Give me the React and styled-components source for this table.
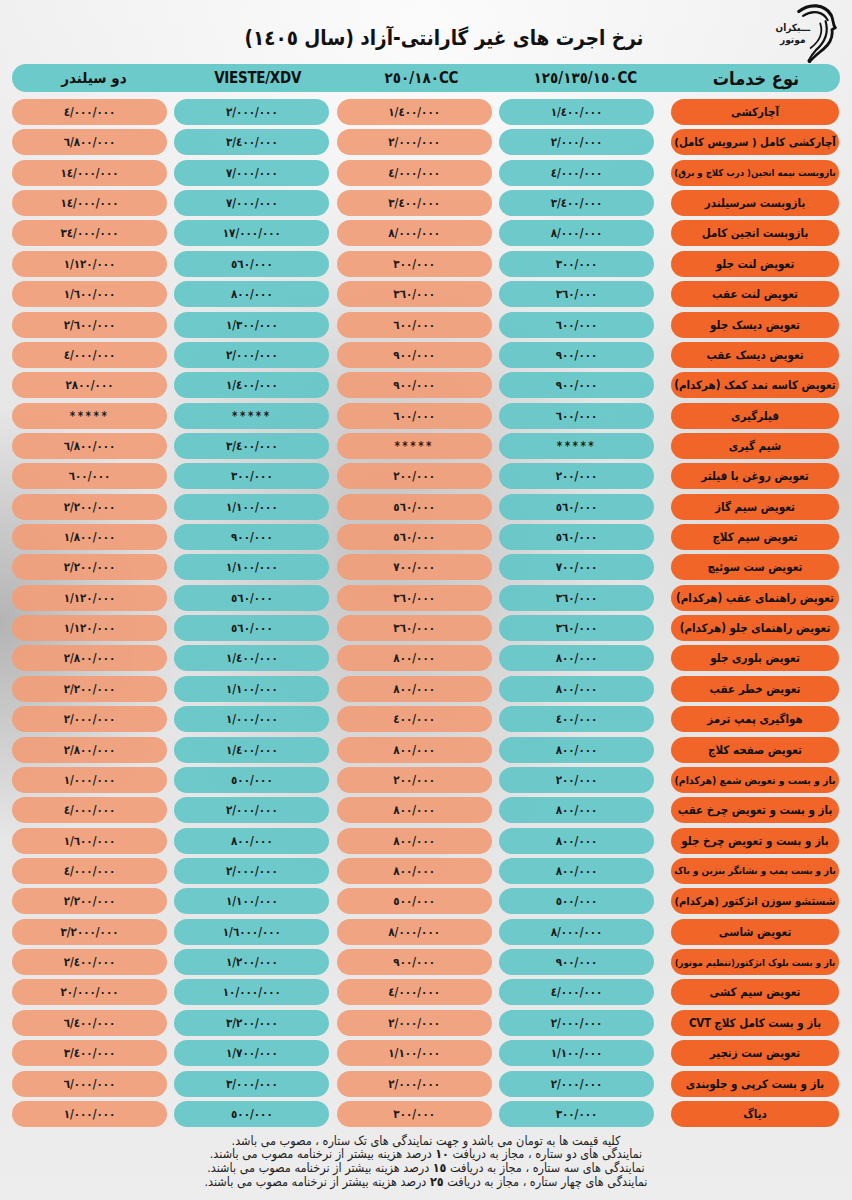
import React, { useLayoutEffect, useRef, useState } from "react";
import styled, { createGlobalStyle } from "styled-components";

const GlobalStyle = createGlobalStyle`
  html, body { margin: 0; padding: 0; }
  body {
    background:
      radial-gradient(ellipse 60% 30% at 50% 2%, rgba(252,252,252,0.95) 0%, rgba(252,252,252,0) 100%),
      radial-gradient(ellipse 22% 18% at 0% 52%, rgba(140,140,140,0.55) 0%, rgba(140,140,140,0) 100%),
      radial-gradient(ellipse 28% 30% at 45% 45%, rgba(120,120,120,0.3) 0%, rgba(120,120,120,0) 100%),
      radial-gradient(ellipse 30% 20% at 100% 40%, rgba(200,200,200,0.5) 0%, rgba(200,200,200,0) 100%),
      linear-gradient(180deg, #eeeeee 0%, #e4e4e4 45%, #e7e7e7 75%, #ededed 100%);
    font-family: "DejaVu Sans Condensed", "DejaVu Sans", sans-serif;
  }
`;

const FONT = `"DejaVu Sans Condensed", "DejaVu Sans", sans-serif`;

const Page = styled.div`
  width: 852px;
  min-height: 1200px;
  direction: rtl;
  font-family: ${FONT};
  color: #151515;
`;

const TopBar = styled.div`
  height: 64px;
  display: grid;
  grid-template-columns: 82px 1fr 118px;
  align-items: center;
`;

const LogoBox = styled.div`
  display: flex;
  align-items: center;
  justify-content: flex-start;
  height: 64px;
  padding-right: 14px;
`;

const LogoText = styled.div`
  display: flex;
  flex-direction: column;
  align-items: center;
  font-size: 10px;
  font-weight: 700;
  line-height: 12px;
  color: #1a1a1a;
  margin-top: 4px;
  margin-right: -14px;
`;

const LogoMark = styled.svg`
  width: 42px;
  height: 60px;
  margin-top: 2px;
  flex-shrink: 0;
`;

const Title = styled.h1`
  margin: 0;
  padding-top: 12px;
  text-align: center;
  font-size: 20.5px;
  font-weight: 700;
  color: #111;
  letter-spacing: -0.3px;
`;

const HeaderBar = styled.div`
  margin: 0 12px;
  height: 28px;
  border-radius: 14px;
  background: #6ccaca;
  display: grid;
  grid-template-columns: 168px 1fr;
  align-items: center;
`;

const HeaderCols = styled.div`
  display: grid;
  grid-template-columns: repeat(4, 1fr);
  align-items: center;
  padding-right: 5px;
`;

const HeaderCell = styled.div`
  text-align: center;
  font-size: ${(p) => (p.$main ? "18px" : "15px")};
  font-weight: 700;
  direction: ${(p) => (p.$ltr ? "ltr" : "rtl")};
  color: #111;
  letter-spacing: ${(p) => (p.$ltr ? "-0.3px" : "0")};
`;

const Table = styled.div`
  margin: 7px 13px 0 12px;
  display: flex;
  flex-direction: column;
  gap: 4.36px;
`;

const Row = styled.div`
  display: grid;
  grid-template-columns: 177.67px repeat(4, 155px);
  column-gap: 7.33px;
  height: 26px;
`;

const ServicePill = styled.div`
  width: 168px;
  height: 26px;
  border-radius: 13px;
  background: #f26529;
  display: flex;
  align-items: center;
  justify-content: center;
  font-size: 11.5px;
  font-weight: 700;
  color: #111;
  white-space: nowrap;
  letter-spacing: -0.3px;
  overflow: hidden;
`;

const ServiceLabel = styled.span`
  display: inline-block;
  white-space: nowrap;
`;

const ValuePill = styled.div`
  height: 26px;
  border-radius: 13px;
  background: ${(p) => (p.$tone === "teal" ? "rgba(100,198,199,0.93)" : "rgba(241,158,120,0.93)")};
  display: flex;
  align-items: center;
  justify-content: center;
  direction: ltr;
  font-size: 11.5px;
  font-weight: 700;
  letter-spacing: 2.5px;
  color: #1a1a1a;
`;

const Footer = styled.div`
  padding-top: 7px;
  text-align: center;
  font-size: 12.5px;
  line-height: 13.6px;
  color: #1e1e1e;
`;

const FooterLine = styled.div``;

const Num = styled.b`
  font-weight: 700;
`;

const rows = [
  ["آچارکشی", "١/٤٠٠/٠٠٠", "١/٤٠٠/٠٠٠", "٢/٠٠٠/٠٠٠", "٤/٠٠٠/٠٠٠"],
  ["آچارکشی کامل ( سرویس کامل)", "٢/٠٠٠/٠٠٠", "٢/٠٠٠/٠٠٠", "٣/٤٠٠/٠٠٠", "٦/٨٠٠/٠٠٠"],
  ["بازوبست نیمه انجین( درب کلاچ و برق)", "٤/٠٠٠/٠٠٠", "٤/٠٠٠/٠٠٠", "٧/٠٠٠/٠٠٠", "١٤/٠٠٠/٠٠٠"],
  ["بازوبست سرسیلندر", "٣/٤٠٠/٠٠٠", "٣/٤٠٠/٠٠٠", "٧/٠٠٠/٠٠٠", "١٤/٠٠٠/٠٠٠"],
  ["بازوبست انجین کامل", "٨/٠٠٠/٠٠٠", "٨/٠٠٠/٠٠٠", "١٧/٠٠٠/٠٠٠", "٣٤/٠٠٠/٠٠٠"],
  ["تعویض لنت جلو", "٣٠٠/٠٠٠", "٣٠٠/٠٠٠", "٥٦٠/٠٠٠", "١/١٢٠/٠٠٠"],
  ["تعویض لنت عقب", "٣٦٠/٠٠٠", "٣٦٠/٠٠٠", "٨٠٠/٠٠٠", "١/٦٠٠/٠٠٠"],
  ["تعویض دیسک جلو", "٦٠٠/٠٠٠", "٦٠٠/٠٠٠", "١/٣٠٠/٠٠٠", "٢/٦٠٠/٠٠٠"],
  ["تعویض دیسک عقب", "٩٠٠/٠٠٠", "٩٠٠/٠٠٠", "٢/٠٠٠/٠٠٠", "٤/٠٠٠/٠٠٠"],
  ["تعویض کاسه نمد کمک (هرکدام)", "٩٠٠/٠٠٠", "٩٠٠/٠٠٠", "١/٤٠٠/٠٠٠", "٢٨٠٠/٠٠٠"],
  ["فیلرگیری", "٦٠٠/٠٠٠", "٦٠٠/٠٠٠", "*****", "*****"],
  ["شیم گیری", "*****", "*****", "٣/٤٠٠/٠٠٠", "٦/٨٠٠/٠٠٠"],
  ["تعویض روغن با فیلتر", "٢٠٠/٠٠٠", "٢٠٠/٠٠٠", "٣٠٠/٠٠٠", "٦٠٠/٠٠٠"],
  ["تعویض سیم گاز", "٥٦٠/٠٠٠", "٥٦٠/٠٠٠", "١/١٠٠/٠٠٠", "٢/٢٠٠/٠٠٠"],
  ["تعویض سیم کلاچ", "٥٦٠/٠٠٠", "٥٦٠/٠٠٠", "٩٠٠/٠٠٠", "١/٨٠٠/٠٠٠"],
  ["تعویض ست سوئیچ", "٧٠٠/٠٠٠", "٧٠٠/٠٠٠", "١/١٠٠/٠٠٠", "٢/٢٠٠/٠٠٠"],
  ["تعویض راهنمای عقب (هرکدام)", "٣٦٠/٠٠٠", "٣٦٠/٠٠٠", "٥٦٠/٠٠٠", "١/١٢٠/٠٠٠"],
  ["تعویض راهنمای جلو (هرکدام)", "٣٦٠/٠٠٠", "٣٦٠/٠٠٠", "٥٦٠/٠٠٠", "١/١٢٠/٠٠٠"],
  ["تعویض بلوری جلو", "٨٠٠/٠٠٠", "٨٠٠/٠٠٠", "١/٤٠٠/٠٠٠", "٢/٨٠٠/٠٠٠"],
  ["تعویض خطر عقب", "٨٠٠/٠٠٠", "٨٠٠/٠٠٠", "١/١٠٠/٠٠٠", "٢/٢٠٠/٠٠٠"],
  ["هواگیری پمپ ترمز", "٤٠٠/٠٠٠", "٤٠٠/٠٠٠", "١/٠٠٠/٠٠٠", "٢/٠٠٠/٠٠٠"],
  ["تعویض صفحه کلاچ", "٨٠٠/٠٠٠", "٨٠٠/٠٠٠", "١/٤٠٠/٠٠٠", "٢/٨٠٠/٠٠٠"],
  ["باز و بست و تعویض شمع (هرکدام)", "٢٠٠/٠٠٠", "٢٠٠/٠٠٠", "٥٠٠/٠٠٠", "١/٠٠٠/٠٠٠"],
  ["باز و بست و تعویض چرخ عقب", "٨٠٠/٠٠٠", "٨٠٠/٠٠٠", "٢/٠٠٠/٠٠٠", "٤/٠٠٠/٠٠٠"],
  ["باز و بست و تعویض چرخ جلو", "٨٠٠/٠٠٠", "٨٠٠/٠٠٠", "٨٠٠/٠٠٠", "١/٦٠٠/٠٠٠"],
  ["باز و بست پمپ و نشانگر بنزین و باک", "٨٠٠/٠٠٠", "٨٠٠/٠٠٠", "٢/٠٠٠/٠٠٠", "٤/٠٠٠/٠٠٠"],
  ["شستشو سوزن انژکتور (هرکدام)", "٥٠٠/٠٠٠", "٥٠٠/٠٠٠", "١/١٠٠/٠٠٠", "٢/٢٠٠/٠٠٠"],
  ["تعویض شاسی", "٨/٠٠٠/٠٠٠", "٨/٠٠٠/٠٠٠", "١/٦٠٠٠/٠٠٠", "٣/٢٠٠٠/٠٠٠"],
  ["باز و بست بلوک انژکتور(تنظیم موتور)", "٩٠٠/٠٠٠", "٩٠٠/٠٠٠", "١/٢٠٠/٠٠٠", "٢/٤٠٠/٠٠٠"],
  ["تعویض سیم کشی", "٤/٠٠٠/٠٠٠", "٤/٠٠٠/٠٠٠", "١٠/٠٠٠/٠٠٠", "٢٠/٠٠٠/٠٠٠"],
  ["باز و بست کامل کلاچ CVT", "٢/٠٠٠/٠٠٠", "٢/٠٠٠/٠٠٠", "٣/٢٠٠/٠٠٠", "٦/٤٠٠/٠٠٠"],
  ["تعویض ست زنجیر", "١/١٠٠/٠٠٠", "١/١٠٠/٠٠٠", "١/٧٠٠/٠٠٠", "٣/٤٠٠/٠٠٠"],
  ["باز و بست کرپی و جلوبندی", "٢/٠٠٠/٠٠٠", "٢/٠٠٠/٠٠٠", "٣/٠٠٠/٠٠٠", "٦/٠٠٠/٠٠٠"],
  ["دیاگ", "٣٠٠/٠٠٠", "٣٠٠/٠٠٠", "٥٠٠/٠٠٠", "١/٠٠٠/٠٠٠"],
];

const tones = ["teal", "salmon", "teal", "salmon"];

const BASE = 11.5;
const MAXW = 162;

function FitLabel({ children }) {
  const ref = useRef(null);
  const [size, setSize] = useState(BASE);
  useLayoutEffect(() => {
    const el = ref.current;
    if (!el) return;
    const w = el.getBoundingClientRect().width;
    if (size === BASE && w > MAXW) setSize(Math.floor((BASE * MAXW * 10) / w) / 10);
  }, [size]);
  return (
    <ServiceLabel ref={ref} style={size !== BASE ? { fontSize: `${size}px` } : undefined}>
      {children}
    </ServiceLabel>
  );
}

function Logo() {
  return (
    <LogoBox>
      <LogoMark viewBox="0 0 38 56" fill="none" stroke="#111" strokeLinecap="round">
        <path d="M2 8 C12 0, 26 1, 32 11" strokeWidth="3" />
        <path d="M6 12 C15 6, 25 8, 29 16" strokeWidth="2" />
        <path d="M32 11 C35 16, 33 19, 36 23 L33 25 C34 32, 31 38, 25 43 C19 48, 15 51, 12 55" strokeWidth="2.6" />
        <path d="M27 17 C30 27, 27 36, 18 44 C15 47, 13 50, 11 54" strokeWidth="2" />
        <path d="M22 19 C25 28, 21 36, 13 42" strokeWidth="1.6" />
      </LogoMark>
      <LogoText>
        <span>ـــیکران</span>
        <span>موتور</span>
      </LogoText>
    </LogoBox>
  );
}

export default function App() {
  return (
    <>
      <GlobalStyle />
      <Page>
        <TopBar>
          <Logo />
          <Title>نرخ اجرت های غیر گارانتی-آزاد (سال ١٤٠٥)</Title>
          <div />
        </TopBar>
        <HeaderBar>
          <HeaderCell $main>نوع خدمات</HeaderCell>
          <HeaderCols>
            <HeaderCell $ltr>١٢٥/١٣٥/١٥٠CC</HeaderCell>
            <HeaderCell $ltr>٢٥٠/١٨٠CC</HeaderCell>
            <HeaderCell $ltr>VIESTE/XDV</HeaderCell>
            <HeaderCell>دو سیلندر</HeaderCell>
          </HeaderCols>
        </HeaderBar>
        <Table>
          {rows.map((r, i) => (
            <Row key={i}>
              <ServicePill>
                <FitLabel>{r[0]}</FitLabel>
              </ServicePill>
              {r.slice(1).map((v, j) => (
                <ValuePill key={j} $tone={tones[j]}>
                  {v}
                </ValuePill>
              ))}
            </Row>
          ))}
        </Table>
        <Footer>
          <FooterLine>کلیه قیمت ها به تومان می باشد و جهت نمایندگی های تک ستاره ، مصوب می باشد.</FooterLine>
          <FooterLine>
            نمایندگی های دو ستاره ، مجاز به دریافت <Num>١٠</Num> درصد هزینه بیشتر از نرخنامه مصوب می باشند.
          </FooterLine>
          <FooterLine>
            نمایندگی های سه ستاره ، مجاز به دریافت <Num>١٥</Num> درصد هزینه بیشتر از نرخنامه مصوب می باشند.
          </FooterLine>
          <FooterLine>
            نمایندگی های چهار ستاره ، مجاز به دریافت <Num>٢٥</Num> درصد هزینه بیشتر از نرخنامه مصوب می باشند.
          </FooterLine>
        </Footer>
      </Page>
    </>
  );
}
